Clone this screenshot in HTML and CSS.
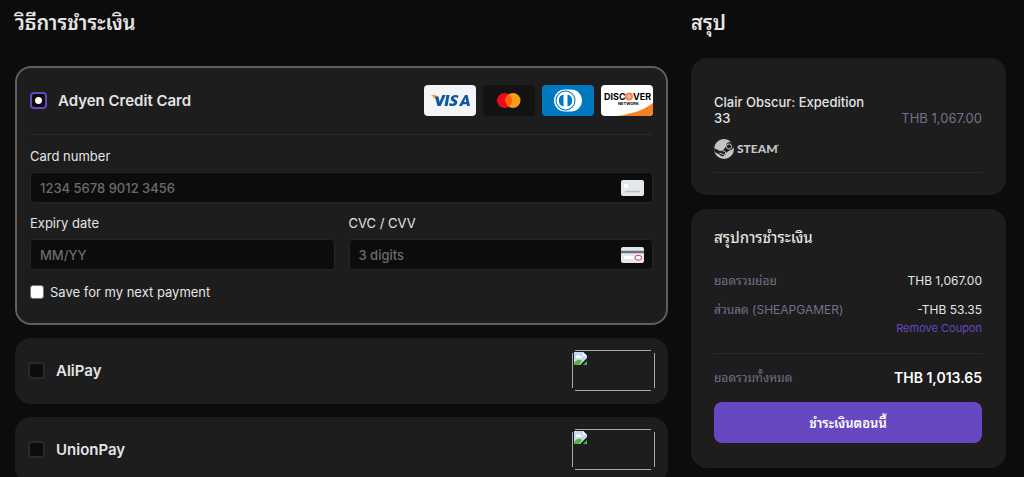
FILE: index.html
```html
<!DOCTYPE html>
<html lang="th">
<head>
    <meta charset="UTF-8">
    <meta name="viewport" content="width=device-width, initial-scale=1.0">
    <title>วิธีการชำระเงิน</title>
    <link rel="stylesheet" href="styles.css">
</head>
<body>
<form class="checkout">
    <main class="methods">
        <h1 class="title">วิธีการชำระเงิน</h1>

        <section class="method selected">
            <div class="method-head">
                <input class="radio" type="radio" name="method" id="method-card" checked>
                <label class="method-name" for="method-card">Adyen Credit Card</label>
                <div class="brands">
                    <svg class="brand" viewBox="0 0 52 31" role="img" aria-label="Visa">
                        <rect width="52" height="31" rx="4" fill="#f3f5f8"/>
                        <path d="M7 10h5l2 2.500 1 5z" fill="#f7a823"/>
                        <g fill="#0f58a0">
                            <path d="M11 11.500l2.500 9.500h3.200l5-11h-3.200l-2.900 7-1.100-5.500z"/>
                            <path d="M22.500 10h3l-2 11h-3z"/>
                            <path d="M34.500 10.400l-.5 2.500c-2-.8-4.200-.8-4.200.3 0 1.200 3.700 1.400 3.500 4.300-.2 3.300-4.500 4.200-8.300 3l.5-2.600c2 .9 4.600 1.100 4.700-.1.100-1.300-3.500-1.400-3.400-4.300.1-3.400 4.600-4.300 7.700-3.100z"/>
                            <path fill-rule="evenodd" d="M41 10h2.600l2.400 11h-2.800l-.4-1.800h-3.900l-.8 1.800h-3.200zM41.500 13l-1.500 3.900h2.300z"/>
                        </g>
                    </svg>
                    <svg class="brand" viewBox="0 0 52 31" role="img" aria-label="Mastercard">
                        <rect width="52" height="31" rx="4" fill="#131313"/>
                        <circle cx="21.500" cy="15.500" r="7.500" fill="#eb0a1e"/>
                        <circle cx="30" cy="15.500" r="7.500" fill="#f79e1b"/>
                        <path d="M25.750 9.300a7.500 7.500 0 0 1 0 12.400a7.500 7.500 0 0 1 0-12.400z" fill="#ff5f00"/>
                    </svg>
                    <svg class="brand" viewBox="0 0 52 31" role="img" aria-label="Diners Club">
                        <rect width="52" height="31" rx="4" fill="#0079c1"/>
                        <path d="M23 4.500h6a11 11 0 0 1 0 22h-6a11 11 0 0 1 0-22z" fill="#fff"/>
                        <circle cx="23.500" cy="15.500" r="10" fill="#0079c1"/>
                        <circle cx="23.500" cy="15.500" r="9" fill="#fff"/>
                        <path d="M21.500 9.500v12a6.200 6.200 0 0 1 0-12zM25.500 9.500v12a6.200 6.200 0 0 0 0-12z" fill="#0079c1"/>
                    </svg>
                    <svg class="brand" viewBox="0 0 52 31" role="img" aria-label="Discover">
                        <rect width="52" height="31" rx="4" fill="#fff"/>
                        <path d="M52 18v9a4 4 0 0 1-4 4H16c15-2 27-6 36-13z" fill="#f58220"/>
                        <text class="discover" x="3" y="15">DISC</text>
                        <circle cx="28" cy="11.500" r="4" fill="#f28b4b"/>
                        <circle cx="28" cy="11.500" r="2" fill="#f9b78e"/>
                        <text class="discover" x="32" y="15">VER</text>
                        <text class="network" x="17" y="20">NETWORK</text>
                    </svg>
                </div>
            </div>

            <div class="fields">
                <div class="field wide">
                    <label for="card-number">Card number</label>
                    <div class="box">
                        <input type="text" id="card-number" placeholder="1234 5678 9012 3456">
                        <svg class="card-icon" viewBox="0 0 23 16">
                            <rect width="23" height="16" rx="2" fill="#e4e8eb"/>
                            <rect x="3" y="4" width="4" height="4" rx="1" fill="#fff"/>
                            <path d="M4 11.500h15" stroke="#b7c2c6" stroke-width="1.500"/>
                        </svg>
                    </div>
                </div>
                <div class="field">
                    <label for="expiry">Expiry date</label>
                    <div class="box">
                        <input type="text" id="expiry" placeholder="MM/YY">
                    </div>
                </div>
                <div class="field">
                    <label for="cvc">CVC / CVV</label>
                    <div class="box">
                        <input type="text" id="cvc" placeholder="3 digits">
                        <svg class="card-icon" viewBox="0 0 23 16">
                            <rect width="23" height="16" rx="2" fill="#e4e8eb"/>
                            <path d="M0 5h23" stroke="#6b6f86" stroke-width="2.500"/>
                            <path d="M3 10.500h10" stroke="#fff" stroke-width="3"/>
                            <rect x="14" y="8.500" width="6.500" height="4.500" rx="2.200" fill="#fff" stroke="#d9345c"/>
                        </svg>
                    </div>
                </div>
            </div>

            <div class="save">
                <input type="checkbox" id="save">
                <label for="save">Save for my next payment</label>
            </div>
        </section>

        <section class="method">
            <div class="method-head">
                <input class="radio" type="radio" name="method" id="method-alipay">
                <label class="method-name" for="method-alipay">AliPay</label>
                <svg class="missing" viewBox="0 0 83 41">
                    <path d="M3 .5h76M3 40.500h76M.5 3v35M82.500 3v35" stroke="#a9a9a9"/>
                    <path d="M2 2h9l4 4v2l-7 7H2z" fill="#c5d8f6"/>
                    <path d="M11 2v4h4z" fill="#fff"/>
                    <path d="M4 7c0-2 3-3 4-1 2 0 2 2 1 2H4z" fill="#fff"/>
                    <path d="M2 15v-2c3-4 6-4 8-2l-3 4zM11 15l4-4v4z" fill="#54b435"/>
                </svg>
            </div>
        </section>

        <section class="method">
            <div class="method-head">
                <input class="radio" type="radio" name="method" id="method-unionpay">
                <label class="method-name" for="method-unionpay">UnionPay</label>
                <svg class="missing" viewBox="0 0 83 41">
                    <path d="M3 .5h76M3 40.500h76M.5 3v35M82.500 3v35" stroke="#a9a9a9"/>
                    <path d="M2 2h9l4 4v2l-7 7H2z" fill="#c5d8f6"/>
                    <path d="M11 2v4h4z" fill="#fff"/>
                    <path d="M4 7c0-2 3-3 4-1 2 0 2 2 1 2H4z" fill="#fff"/>
                    <path d="M2 15v-2c3-4 6-4 8-2l-3 4zM11 15l4-4v4z" fill="#54b435"/>
                </svg>
            </div>
        </section>
    </main>

    <aside class="summary">
        <h1 class="title">สรุป</h1>

        <section class="panel product">
            <div class="product-row">
                <h2 class="product-name">Clair Obscur: Expedition 33</h2>
                <span class="product-price">THB 1,067.00</span>
            </div>
            <div class="platform">
                <svg class="steam" viewBox="0 0 68 22" role="img" aria-label="Steam">
                    <circle cx="10" cy="11" r="10" fill="#c4c4c4"/>
                    <path d="M0 10l6 3 3-.5 3-4a4 4 0 1 1 4 3.500l-4 3a3.500 3.500 0 0 1-6.500 1.500L.5 14z" fill="#1d1d1d"/>
                    <circle cx="15" cy="8.500" r="2.600" fill="none" stroke="#c4c4c4"/>
                    <path d="M5.500 15l3 1.300a1.900 1.900 0 1 0 .3-3" fill="none" stroke="#c4c4c4"/>
                    <text class="steam-text" x="23" y="15">STEAM</text>
                    <circle cx="64" cy="7.500" r="1" fill="#8a8a8a"/>
                </svg>
            </div>
        </section>

        <section class="panel totals">
            <h2 class="subtitle">สรุปการชำระเงิน</h2>
            <dl class="lines">
                <dt>ยอดรวมย่อย</dt>
                <dd>THB 1,067.00</dd>
                <dt>ส่วนลด (SHEAPGAMER)</dt>
                <dd>-THB 53.35 <a class="remove" href="#">Remove Coupon</a></dd>
            </dl>
            <div class="total">
                <span class="total-label">ยอดรวมทั้งหมด</span>
                <strong class="total-price">THB 1,013.65</strong>
            </div>
            <button class="pay" type="submit">ชำระเงินตอนนี้</button>
        </section>
    </aside>
</form>
</body>
</html>
```
FILE: styles.css
```css
* {
    box-sizing: border-box;
}

body {
    margin: 0;
    background-color: #0c0c0c;
    color: #e4e4e4;
    font-family: Inter, "Noto Sans Thai Looped", Loma, Waree, Garuda, sans-serif;
    font-size: 13px;
    line-height: 16px;
}

h1, h2, dl, dd {
    margin: 0;
}

.checkout {
    display: grid;
    grid-template-columns: minmax(0, 1fr) 315px;
    gap: 23px;
    padding: 8px 18px 0 15px;
}

.title {
    height: 30px;
    font-size: 20px;
    font-weight: 600;
    line-height: 30px;
}

.methods .title {
    margin-bottom: 28px;
}

.method {
    margin-bottom: 13px;
    padding: 12px 13px 13px;
    border-radius: 16px;
    background-color: #1d1d1d;
}

.method.selected {
    padding: 17px 13px 23px;
    border: 2px solid #5f5f5f;
}

.method-head {
    display: flex;
    align-items: center;
}

.selected .method-head {
    padding-bottom: 18px;
    border-bottom: 1px solid #2a2a2a;
}

.radio {
    appearance: none;
    width: 17px;
    height: 17px;
    margin: 0 11px 0 0;
    border: 2px solid #29292c;
    border-radius: 4px;
    background-color: #0c0c0c;
}

.radio:checked {
    border-color: #6747c1;
    background-image: radial-gradient(circle, #fff 3px, transparent 4px);
}

.method-name {
    flex-grow: 1;
    font-size: 15px;
    font-weight: 600;
    line-height: 20px;
}

.brands {
    display: flex;
    gap: 7px;
}

.brand {
    width: 52px;
    height: 31px;
}

.discover {
    font-size: 9px;
    font-weight: 700;
}

.network {
    font-size: 4px;
    font-weight: 700;
}

.missing {
    width: 83px;
    height: 41px;
    fill: none;
}

.fields {
    display: grid;
    grid-template-columns: 1fr 1fr;
    gap: 12px 14px;
    padding-top: 13px;
}

.wide {
    grid-column: 1 / 3;
}

.field label {
    display: block;
    margin-bottom: 8px;
}

.box {
    display: flex;
    align-items: center;
    height: 31px;
    padding: 0 8px 0 9px;
    border: 1px solid #252525;
    border-radius: 4px;
    background-color: #0c0c0c;
}

.box input {
    flex-grow: 1;
    width: 0;
    padding: 0;
    border: 0;
    outline: 0;
    background: none;
    color: #e4e4e4;
    font: inherit;
    font-weight: 500;
}

.box input::placeholder {
    color: #6b6b6b;
}

.card-icon {
    width: 23px;
    height: 16px;
}

.save {
    display: flex;
    align-items: center;
    gap: 6px;
    padding-top: 14px;
}

.save input {
    appearance: none;
    width: 14px;
    height: 14px;
    margin: 0;
    border: 1px solid #767676;
    border-radius: 3px;
    background-color: #fff;
}

.summary .title {
    margin-bottom: 20px;
}

.panel {
    margin-bottom: 14px;
    padding: 17px 24px 25px 23px;
    border-radius: 16px;
    background-color: #1d1d1d;
}

.product {
    padding: 36px 24px 22px 23px;
}

.product-row {
    display: flex;
    align-items: flex-end;
    justify-content: space-between;
    gap: 24px;
}

.product-name {
    font-size: 13px;
    font-weight: 500;
    line-height: 16px;
}

.product-price {
    flex-shrink: 0;
    color: #757089;
}

.platform {
    padding: 12px 0;
    border-bottom: 1px solid #2a2a2a;
}

.steam {
    display: block;
    width: 68px;
    height: 22px;
}

.steam-text {
    fill: #c4c4c4;
    font-family: Lato, sans-serif;
    font-size: 12px;
    font-weight: 900;
}

.subtitle {
    font-size: 15px;
    font-weight: 500;
    line-height: 24px;
}

.lines {
    display: grid;
    grid-template-columns: auto auto;
    gap: 11px;
    padding: 22px 0 16px;
    border-bottom: 1px solid #2a2a2a;
    font-size: 12px;
    line-height: 18px;
}

.lines dt, .total-label {
    color: #757089;
}

.total-label {
    font-size: 12px;
}

.lines dd {
    text-align: right;
}

.remove {
    display: block;
    color: #6747c1;
    font-size: 11px;
    text-decoration: none;
}

.total {
    display: flex;
    align-items: center;
    justify-content: space-between;
    height: 48px;
}

.total-price {
    color: #fff;
    font-size: 14px;
    font-weight: 600;
}

.pay {
    width: 100%;
    height: 41px;
    border: 0;
    border-radius: 8px;
    background-color: #6747c1;
    color: #fff;
    font: inherit;
    font-weight: 600;
}
```
